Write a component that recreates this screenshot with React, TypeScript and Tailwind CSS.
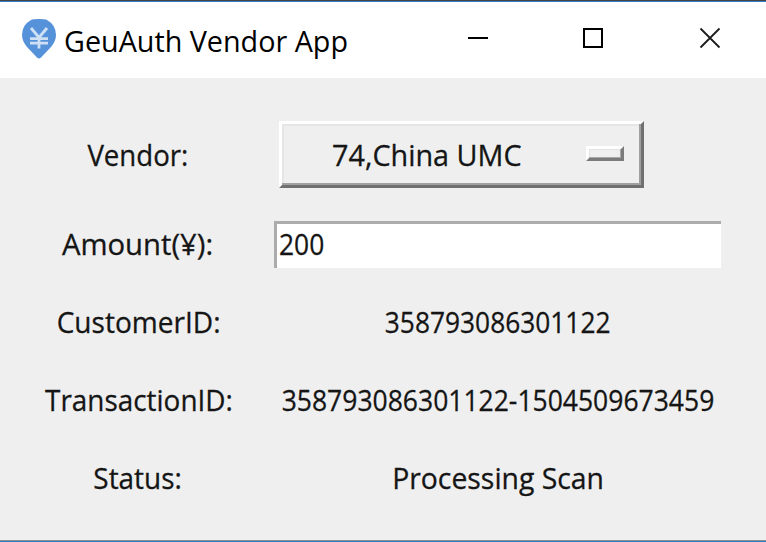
import type { ReactNode } from "react";

function PinIcon() {
  return (
    <svg className="mt-[19px] ml-[22px] h-10 w-[34px] shrink-0" viewBox="0 0 34 40" fill="none">
      <path d="M9 1 Q11 0 17 0 T25 1 Q34 6 34 16 Q34 22 29 28 L19 38.5 Q17 40.5 15 38.5 L5 28 Q0 22 0 16 Q0 6 9 1Z" fill="#5592da" />
      <path d="M9 9 L17 18.5 L25 9 M17 18 V29.5 M8 19.7 H26 M8 24.2 H26" stroke="#cfe0f5" strokeWidth="2.8" />
    </svg>
  );
}

function TitleBar() {
  return (
    <header className="flex h-[77px] border-t border-[#2f7ac0] bg-white">
      <div className="-mt-[2px] flex">
        <PinIcon />
        <h1 className="mt-[21px] ml-[8px] h-10 w-[300px] origin-left scale-x-[1.008] text-[28.5px] leading-10 whitespace-nowrap text-black">
          GeuAuth Vendor App
        </h1>
      </div>
      <svg className="-mt-[2px] ml-auto h-[76px] w-[326px]" viewBox="440 0 326 76" fill="none" stroke="#000" strokeWidth="2">
        <path d="M468 38H488" shapeRendering="crispEdges" />
        <path d="M584 29H602V47H584Z" shapeRendering="crispEdges" />
        <path d="M700.5 28.5L719.5 47.5M719.5 28.5L700.5 47.5" stroke="#1b1b1b" strokeWidth="1.8" />
      </svg>
    </header>
  );
}

function Label({ children }: { children: ReactNode }) {
  return <div className="flex items-center justify-center pl-[2px] [-webkit-text-stroke:0.3px_#151515]">{children}</div>;
}

export default function App() {
  return (
    <main className="flex h-[542px] w-[766px] flex-col overflow-hidden border-t border-[#444444] bg-[#efefef] font-['Open_Sans','Noto_Sans',sans-serif] text-[30px] leading-10 whitespace-nowrap text-[#151515]">
      <TitleBar />
      <section className="grid grow grid-cols-[274px_447px] grid-rows-[95px_78px_78px_78px_78px] border-b border-[#2f7ac0] pt-8 shadow-[inset_0_-1px_0_#8f8f8f]">
        <Label><span className="-mt-[6px] scale-x-[0.92]">Vendor:</span></Label>
        <div className="pt-[11px] pl-[5px]">
          <button className="flex h-[67px] w-[365px] items-center border-3 border-t-white border-r-[#707070] border-b-[#707070] border-l-white shadow-[inset_-2px_-2px_0_#a0a0a0,inset_2px_2px_0_#e6e6e6]">
            <span className="ml-[50px] w-[254px] origin-left scale-x-[0.96] text-left [-webkit-text-stroke:0.3px_#151515]">74,China UMC</span>
            <span className="-mt-[3px] block h-[15px] w-[38px] border-3 border-t-white border-r-[#7b7b7b] border-b-[#7b7b7b] border-l-white shadow-[inset_-1px_-1px_0_#a8a8a8,inset_1px_1px_0_#e3e3e3]" />
          </button>
        </div>
        <Label><span className="scale-x-[0.975]">Amount(¥):</span></Label>
        <div className="flex items-center">
          <div className="flex h-[47px] w-[447px] items-center border-t-3 border-l-3 border-[#acacac] bg-white">
            <span className="-mt-[4px] ml-[2px] origin-left scale-x-[0.88] [-webkit-text-stroke:0.3px_#151515]">200</span>
          </div>
        </div>
        <Label><span className="ml-[2px] scale-x-[0.935]">CustomerID:</span></Label>
        <Label><span className="-ml-[2px] scale-x-[0.877]">358793086301122</span></Label>
        <Label><span className="ml-[2px] scale-x-[0.93]">TransactionID:</span></Label>
        <Label><span className="-ml-[2px] scale-x-[0.883]">358793086301122-1504509673459</span></Label>
        <Label><span className="scale-x-[0.93]">Status:</span></Label>
        <Label><span className="scale-x-[0.945]">Processing Scan</span></Label>
      </section>
    </main>
  );
}
